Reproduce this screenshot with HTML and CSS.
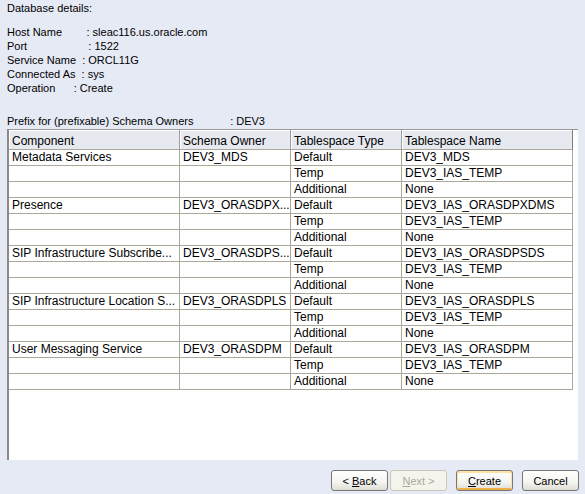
FILE: index.html
```html
<!DOCTYPE html>
<html>
<head>
<meta charset="utf-8">
<link rel="stylesheet" href="styles.css">
</head>
<body>
<div class="page">
  <p class="title">Database details:</p>
  <div class="details">Host Name        : sleac116.us.oracle.com
Port                    : 1522
Service Name  : ORCL11G
Connected As  : sys
Operation      : Create</div>
  <div class="prefix">Prefix for (prefixable) Schema Owners            : DEV3</div>
  <div class="pane">
    <table class="grid">
      <colgroup>
        <col class="c-wide"><col class="c-mid"><col class="c-mid"><col class="c-wide">
      </colgroup>
      <thead>
        <tr><th>Component</th><th>Schema Owner</th><th>Tablespace Type</th><th class="last">Tablespace Name</th></tr>
      </thead>
      <tbody>
        <tr><td>Metadata Services</td><td>DEV3_MDS</td><td>Default</td><td>DEV3_MDS</td></tr>
        <tr><td></td><td></td><td>Temp</td><td>DEV3_IAS_TEMP</td></tr>
        <tr><td></td><td></td><td>Additional</td><td>None</td></tr>
        <tr><td>Presence</td><td>DEV3_ORASDPX...</td><td>Default</td><td>DEV3_IAS_ORASDPXDMS</td></tr>
        <tr><td></td><td></td><td>Temp</td><td>DEV3_IAS_TEMP</td></tr>
        <tr><td></td><td></td><td>Additional</td><td>None</td></tr>
        <tr><td>SIP Infrastructure Subscribe...</td><td>DEV3_ORASDPS...</td><td>Default</td><td>DEV3_IAS_ORASDPSDS</td></tr>
        <tr><td></td><td></td><td>Temp</td><td>DEV3_IAS_TEMP</td></tr>
        <tr><td></td><td></td><td>Additional</td><td>None</td></tr>
        <tr><td>SIP Infrastructure Location S...</td><td>DEV3_ORASDPLS</td><td>Default</td><td>DEV3_IAS_ORASDPLS</td></tr>
        <tr><td></td><td></td><td>Temp</td><td>DEV3_IAS_TEMP</td></tr>
        <tr><td></td><td></td><td>Additional</td><td>None</td></tr>
        <tr><td>User Messaging Service</td><td>DEV3_ORASDPM</td><td>Default</td><td>DEV3_IAS_ORASDPM</td></tr>
        <tr><td></td><td></td><td>Temp</td><td>DEV3_IAS_TEMP</td></tr>
        <tr><td></td><td></td><td>Additional</td><td>None</td></tr>
      </tbody>
    </table>
  </div>
  <div class="actions">
    <button class="btn">&lt; <u>B</u>ack</button>
    <button class="btn btn-next" disabled><u>N</u>ext &gt;</button>
    <button class="btn btn-default btn-sep"><u>C</u>reate</button>
    <button class="btn btn-sep">Cancel</button>
  </div>
</div>
</body>
</html>
```
FILE: styles.css
```css
* { box-sizing: border-box; }
html, body { margin: 0; padding: 0; }
body {
  width: 585px;
  height: 494px;
  overflow: hidden;
  background: #e6eaf5;
  font-family: "Liberation Sans", Arial, sans-serif;
  font-size: 11px;
  color: #000;
}
.page {
  display: flex;
  flex-direction: column;
  height: 494px;
  padding: 1px 0 0 7px;
}
.title { margin: 0; line-height: 14px; }
.details { margin-top: 10px; line-height: 14px; white-space: pre; }
.prefix { margin-top: 19px; line-height: 14px; white-space: pre; }
.pane {
  margin-top: 1px;
  width: 571px;
  height: 331px;
  flex: none;
  border-top: 1px solid #9a9a9a;
  border-left: 2px solid #8a8a8a;
  background: #fff;
  overflow: hidden;
}
.grid {
  border-collapse: separate;
  border-spacing: 0;
  table-layout: fixed;
  width: 564px;
  font-size: 12px;
}
.c-wide { width: 171px; }
.c-mid { width: 111px; }
.grid th {
  height: 20px;
  padding: 2px 0 0 3px;
  text-align: left;
  font-weight: normal;
  background: #e7e9f1;
  border-right: 1px solid #9d9d9d;
  border-bottom: 1px solid #aca899;
  box-shadow: inset 1px 1px 0 #fff;
  white-space: nowrap;
  overflow: hidden;
}
.grid th.last { border-right: 1px solid #7c7c7c; }
.grid td {
  height: 16px;
  padding: 0 0 0 3px;
  line-height: 15px;
  border-right: 1px solid #aca899;
  border-bottom: 1px solid #aca899;
  white-space: nowrap;
  overflow: hidden;
}
.actions {
  display: flex;
  justify-content: flex-end;
  gap: 2px;
  margin-top: 10px;
  padding-right: 6px;
}
.btn {
  width: 57px;
  height: 21px;
  padding: 0;
  border: 1px solid #777;
  border-radius: 3px;
  background: linear-gradient(#ffffff, #f4f4f0 60%, #dedcd4);
  font-family: "Liberation Sans", Arial, sans-serif;
  font-size: 11px;
  color: #000;
}
.btn-sep { margin-left: 7px; }
.btn-next {
  border-color: #c9c7ba;
  background: #f5f4ec;
  color: #aca899;
}
.btn-default {
  box-shadow: inset 0 1px 0 1px #ffe2a6, inset 0 -1px 0 1px #f0b048;
}
```
